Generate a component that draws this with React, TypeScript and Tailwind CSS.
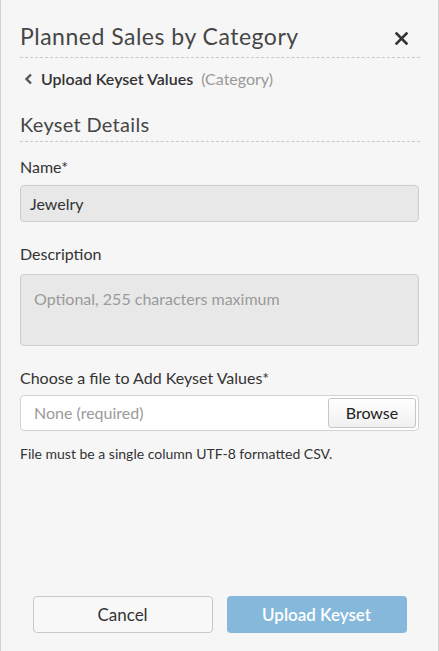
export default function App() {
  return (
    <div
      className="h-screen w-full flex flex-col bg-[#f6f6f6] border-x border-[#d2d2d2] text-[#333] pl-[19px] pr-[18px]"
      style={{ fontFamily: 'Lato, "Liberation Sans", sans-serif' }}
    >
      {/* header */}
      <div className="flex items-center justify-between pt-[20px] pb-[5px] border-b border-dashed border-[#c8c8c8]">
        <h1 className="text-[23px] leading-[32px] tracking-[0.5px] text-[#464646]">Planned Sales by Category</h1>
        <button className="mr-[12px] mt-[4px] text-[#333]">
          <svg width="13" height="13" viewBox="0 0 13 13">
            <path d="M1.5 1.5 L11.5 11.5 M11.5 1.5 L1.5 11.5" stroke="currentColor" strokeWidth="2.6" strokeLinecap="square" />
          </svg>
        </button>
      </div>

      <div className="flex items-center mt-[9px] h-[24px]">
        <svg width="9" height="12" viewBox="0 0 9 12" className="ml-[4px] mr-[8px] text-[#555]">
          <path d="M7 1.5 L2.5 6 L7 10.5" stroke="currentColor" strokeWidth="2.4" fill="none" />
        </svg>
        <span className="text-[16px] font-semibold text-[#333]">Upload Keyset Values</span>
        <span className="ml-[8px] text-[16px] text-[#999]">(Category)</span>
      </div>

      <div className="mt-[19px] pb-[3px] border-b border-dashed border-[#c8c8c8]">
        <h2 className="text-[20px] leading-[28px] tracking-[0.3px] text-[#464646]">Keyset Details</h2>
      </div>

      <div className="flex flex-col pr-[1px]">
        <label className="mt-[14px] text-[16px] leading-[22px]">Name*</label>
        <div className="mt-[7px] h-[37px] flex items-center px-[9px] bg-[#e8e8e8] border border-[#cdcdcd] rounded-[4px] text-[16px]">
          Jewelry
        </div>

        <label className="mt-[21px] text-[16px] leading-[22px]">Description</label>
        <div className="mt-[9px] h-[72px] px-[13px] pt-[12px] bg-[#e8e8e8] border border-[#cdcdcd] rounded-[4px] text-[16px] text-[#9a9a9a]">
          Optional, 255 characters maximum
        </div>

        <label className="mt-[21px] text-[16px] leading-[22px]">Choose a file to Add Keyset Values*</label>
        <div className="mt-[6px] h-[36px] flex items-center justify-between bg-white border border-[#d2d2d2] rounded-[4px] pl-[13px] pr-[2px]">
          <span className="text-[16px] text-[#9a9a9a]">None (required)</span>
          <button className="h-[30px] w-[88px] border border-[#c6c6c6] rounded-[3px] bg-gradient-to-b from-white to-[#f0f0f0] text-[16px] text-[#222]">
            Browse
          </button>
        </div>

        <p className="mt-[14px] text-[14px] leading-[18px] text-[#333]">File must be a single column UTF-8 formatted CSV.</p>
      </div>

      <div className="mt-auto flex justify-center gap-[14px] pb-[18px] pr-[1px]">
        <button className="w-[180px] h-[37px] border border-[#c8c8c8] rounded-[4px] bg-[#f8f8f8] text-[17px] text-[#333]">
          Cancel
        </button>
        <button className="w-[180px] h-[37px] rounded-[4px] bg-[#85b8da] text-[17px] font-semibold text-white">
          Upload Keyset
        </button>
      </div>
    </div>
  );
}
